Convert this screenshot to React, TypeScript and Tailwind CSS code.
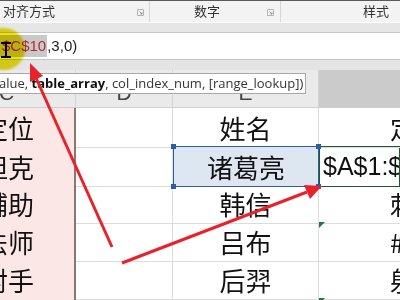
const cjk = { fontFamily: '"Noto Sans CJK SC", "Liberation Sans", sans-serif' }
const arial = { fontFamily: '"Liberation Sans", Arial, sans-serif' }

const rows = [
  { c: '定位', e: '姓名', f: '定位' },
  { c: '坦克', e: '诸葛亮', f: '' },
  { c: '辅助', e: '韩信', f: '刺客' },
  { c: '法师', e: '吕布', f: '#N/A' },
  { c: '射手', e: '后羿', f: '射手' },
]

function Launcher() {
  return (
    <svg width="7" height="7" viewBox="0 0 7 7" className="mt-[8px]">
      <path d="M0.5 0.5 H6.5 V6.5 H0.5 Z" fill="none" stroke="#b4b4b4" strokeWidth="1" />
      <path d="M2.5 2.5 L5 5 M5 3.5 V5 H3.5" fill="none" stroke="#8c8c8c" strokeWidth="1" />
    </svg>
  )
}

function Ribbon() {
  return (
    <div className="flex h-[23px] border-t border-[#5a5a5a] bg-[#f3f3f3] border-b border-b-white" style={cjk}>
      <div className="flex w-[150px] justify-between pl-[3px] pr-[5px] border-r border-[#d6d6d6]">
        <span className="text-[13px] text-[#333] leading-[20px]">对齐方式</span>
        <Launcher />
      </div>
      <div className="flex w-[131px] justify-between pl-[44px] pr-[6px] border-r border-[#d6d6d6]">
        <span className="text-[13px] text-[#333] leading-[20px]">数字</span>
        <Launcher />
      </div>
      <div className="flex flex-1 pl-[82px]">
        <span className="text-[13px] text-[#333] leading-[20px]">样式</span>
      </div>
    </div>
  )
}

function FormulaBar() {
  return (
    <>
      <div className="h-[10px] bg-[#e6e6e6] border-b border-[#c6c6c6]" />
      <div className="relative h-[27px] bg-white border-b border-[#c6c6c6] flex items-center" style={arial}>
        <span className="bg-[#c9c9c9] text-[#b02a2a] text-[15px] leading-[22px] pl-[2px] pr-[1px]">$C$10</span>
        <span className="text-[15px] text-[#222] leading-[22px]">,3,0)</span>
        <div className="absolute left-[5px] top-[9px] w-[2px] h-[16px] bg-black" />
        <div className="absolute left-[1px] top-[9px] w-[10px] h-[2px] bg-black" />
        <div className="absolute left-[1px] top-[23px] w-[10px] h-[2px] bg-black" />
      </div>
      <div className="h-[10px] bg-[#e4e4e4]" />
    </>
  )
}

function HeaderRow() {
  return (
    <div className="grid grid-cols-[76px_97px_146px_81px] h-[38px] bg-[#eaeaea] border-b border-[#cfcfcf]" style={arial}>
      <div className="overflow-hidden border-r border-[#d4d4d4] flex items-end">
        <div className="w-[138px] ml-[-62px] text-center text-[21px] text-[#444] leading-[24px] pb-[2px]">C</div>
      </div>
      <div className="border-r border-[#d4d4d4] flex items-end justify-center text-[21px] text-[#444] leading-[24px] pb-[2px]">D</div>
      <div className="border-r border-[#d4d4d4] flex items-end justify-center text-[21px] text-[#444] leading-[24px] pb-[2px]">E</div>
      <div className="bg-[#cbcbcb]" />
    </div>
  )
}

function Corner({ className }: { className: string }) {
  return <div className={`absolute w-[5px] h-[5px] bg-[#2e5da8] ${className}`} />
}

function GridRows() {
  return (
    <div style={cjk}>
      {rows.map((r, i) => (
        <div key={i} className="grid grid-cols-[76px_97px_146px_81px] h-[38px]">
          <div className="overflow-hidden bg-[#fbe7e5] border-r-2 border-r-[#8c7671] border-b border-b-[#dcdcdc] flex items-center">
            <div className="w-[138px] ml-[-58px] text-center text-[26px] text-[#111] whitespace-nowrap">{r.c}</div>
          </div>
          <div className="border-r border-b border-[#dcdcdc]" />
          <div
            className={
              i === 1
                ? 'relative bg-[#dde6f1] border-[1.5px] border-[#2e5da8] flex items-center justify-center text-[26px] text-[#111]'
                : 'border-r border-b border-[#dcdcdc] flex items-center justify-center text-[26px] text-[#111]'
            }
          >
            {r.e}
            {i === 1 && (
              <>
                <Corner className="left-[-3px] top-[-3px]" />
                <Corner className="left-[-3px] bottom-[-3px]" />
                <Corner className="right-[-3px] top-[-3px]" />
                <Corner className="right-[-3px] bottom-[-3px]" />
              </>
            )}
          </div>
          {i === 1 ? (
            <div className="overflow-hidden border border-[#1e5a30] flex items-center pl-[3px] text-[25px] text-[#111] whitespace-nowrap" style={arial}>
              $A$1:$C$10
            </div>
          ) : (
            <div className="relative overflow-hidden border-b border-[#dcdcdc] flex items-center pl-[71px] text-[26px] text-[#111] whitespace-nowrap">
              {r.f}
              {i === 3 && (
                <svg className="absolute left-0 top-0" width="6" height="6"><path d="M0 0 H6 L0 6 Z" fill="#1e7a3a" /></svg>
              )}
            </div>
          )}
        </div>
      ))}
      <div className="grid grid-cols-[76px_97px_146px_81px] h-[10px]">
        <div className="bg-[#fbe7e5] border-r-2 border-r-[#8c7671]" />
        <div className="border-r border-[#dcdcdc]" />
        <div className="border-r border-[#dcdcdc]" />
        <div className="relative">
          <svg className="absolute left-0 top-0" width="6" height="6"><path d="M0 0 H6 L0 6 Z" fill="#1e7a3a" /></svg>
        </div>
      </div>
    </div>
  )
}

function Tooltip() {
  return (
    <div
      className="absolute left-[-1px] top-[73px] w-[307px] h-[21px] bg-white border border-[#a8a8a8] flex items-center text-[13px] text-[#333] whitespace-nowrap overflow-hidden"
      style={{ fontFamily: '"Open Sans", "Liberation Sans", sans-serif' }}
    >
      <span className="ml-[-1px]">alue, <b className="text-[#111]">table_array</b>, col_index_num, [range_lookup])</span>
    </div>
  )
}

function Arrows() {
  return (
    <svg className="absolute left-0 top-0 pointer-events-none" width="400" height="300">
      <line x1="112" y1="247" x2="36" y2="78" stroke="#e8222a" strokeWidth="3" />
      <polygon points="30,63 43,76 30,82" fill="#e8222a" />
      <line x1="122" y1="263" x2="307" y2="192" stroke="#e8222a" strokeWidth="3" />
      <polygon points="322,186 310,199 304,185" fill="#e8222a" />
    </svg>
  )
}

export default function App() {
  return (
    <div className="relative w-[400px] h-[300px] overflow-hidden bg-white">
      <Ribbon />
      <FormulaBar />
      <HeaderRow />
      <GridRows />
      <Tooltip />
      <div className="absolute left-[-20px] top-[28px] w-[45px] h-[42px] rounded-full bg-[#ebe01c] mix-blend-multiply blur-[1px]" />
      <Arrows />
    </div>
  )
}
